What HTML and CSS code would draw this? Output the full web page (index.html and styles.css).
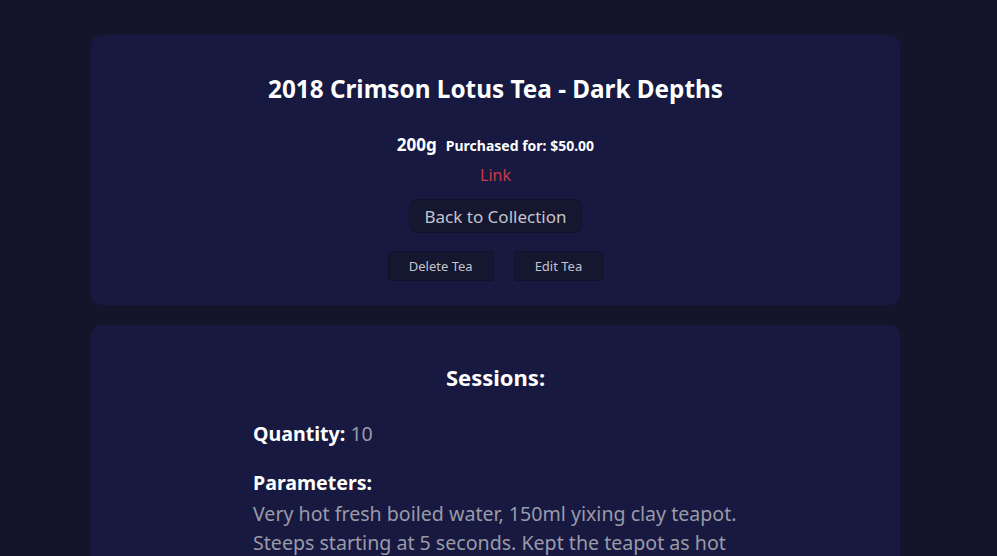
FILE: index.html
```html
<!DOCTYPE html>
<html>
<head>
<meta charset="utf-8">
<link rel="stylesheet" href="styles.css">
</head>
<body>
<main class="page">
  <section class="card tea-card">
    <h1 class="title">2018 Crimson Lotus Tea - Dark Depths</h1>
    <p class="meta"><span class="weight">200g</span><span class="price">Purchased for: $50.00</span></p>
    <a class="link" href="#">Link</a>
    <button class="btn-back">Back to Collection</button>
    <div class="actions">
      <button class="btn-small">Delete Tea</button>
      <button class="btn-small">Edit Tea</button>
    </div>
  </section>
  <section class="card sessions-card">
    <h2 class="sessions-title">Sessions:</h2>
    <div class="session">
      <p class="field"><strong>Quantity:</strong> 10</p>
      <p class="field-label">Parameters:</p>
      <p class="field-text">Very hot fresh boiled water, 150ml yixing clay teapot. Steeps starting at 5 seconds. Kept the teapot as hot as possible between steeps.</p>
    </div>
  </section>
</main>
</body>
</html>
```
FILE: styles.css
```css
html, body {
  margin: 0;
  padding: 0;
  background: #14142a;
  height: 556px;
  overflow: hidden;
}
body {
  font-family: "Noto Sans", sans-serif;
  color: #ffffff;
}
.page {
  width: 809px;
  margin: 35px 0 0 91px;
  display: flex;
  flex-direction: column;
  gap: 20px;
}
.card {
  background: #171940;
  border-radius: 10px;
}
.tea-card {
  display: flex;
  flex-direction: column;
  align-items: center;
  padding: 38px 0 24px;
  height: 270px;
  box-sizing: border-box;
}
.title {
  margin: 0;
  font-size: 24.3px;
  font-weight: 700;
  line-height: 32px;
}
.meta {
  margin: 30px 0 0;
  display: flex;
  align-items: baseline;
  gap: 9px;
  line-height: 20px;
}
.weight { font-size: 17px; font-weight: 700; }
.price { font-size: 14px; font-weight: 700; }
.link {
  margin-top: 9px;
  color: #c93a4a;
  font-size: 16px;
  text-decoration: none;
  line-height: 20px;
}
.btn-back {
  margin-top: 14px;
  height: 34px;
  padding: 0 15px;
  background: #15162f;
  border: 1px solid #10112a;
  border-radius: 8px;
  color: #c4c4cc;
  font-family: inherit;
  font-size: 17px;
}
.actions {
  margin-top: 18px;
  display: flex;
  gap: 20px;
}
.btn-small {
  height: 30px;
  padding: 0 20px;
  background: #15162f;
  border: 1px solid #10112a;
  border-radius: 3px;
  color: #c4c4cc;
  font-family: inherit;
  font-size: 13px;
}
.sessions-card {
  padding: 38px 162px 40px;
}
.sessions-title {
  margin: 0;
  text-align: center;
  font-size: 22px;
  font-weight: 700;
  line-height: 28px;
}
.session {
  margin-top: 29px;
  font-size: 19.6px;
  color: #9a9aa9;
}
.field {
  margin: 0;
  line-height: 28px;
}
.field strong, .field-label {
  color: #ffffff;
  font-weight: 700;
}
.field-label {
  margin: 21px 0 0;
  line-height: 28px;
}
.field-text {
  margin: 2px 0 0;
  line-height: 29px;
  width: 490px;
}
```
